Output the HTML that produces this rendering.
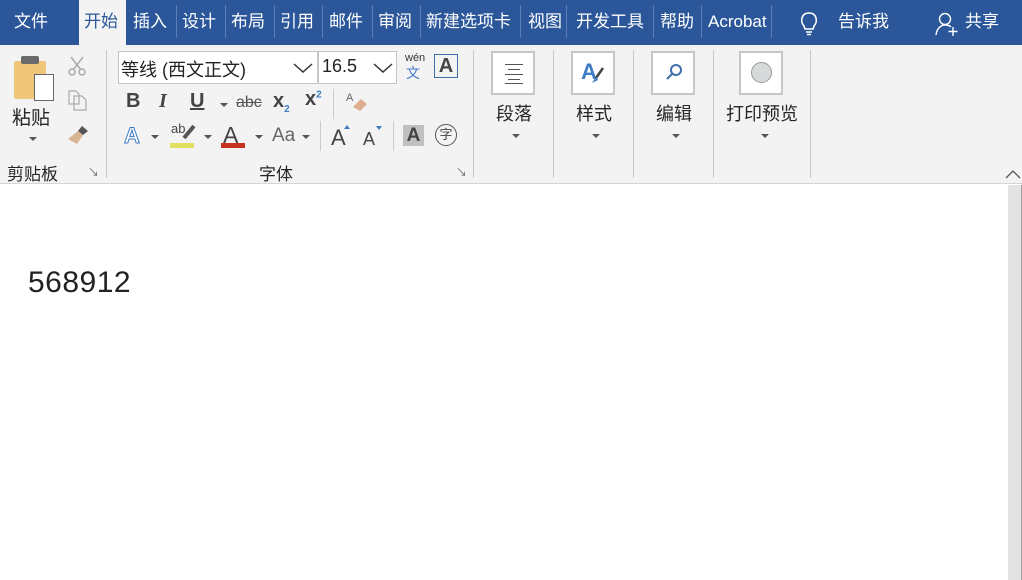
<!DOCTYPE html>
<html><head><meta charset="utf-8"><style>
*{margin:0;padding:0;box-sizing:border-box}
body{width:1022px;height:580px;overflow:hidden;background:#fff;position:relative;font-family:"Liberation Sans","Noto Sans CJK SC",sans-serif;color:#262626}
.a{position:absolute;white-space:nowrap}
#top{position:absolute;left:0;top:0;width:1022px;height:45px;background:#2b579a}
.t{position:absolute;top:11px;font-size:17px;color:#fff;line-height:22px}
.sep{position:absolute;top:5px;width:1px;height:33px;background:#5a7db5}
#rib{position:absolute;left:0;top:45px;width:1022px;height:139px;background:#f3f3f3;border-bottom:1px solid #d5d5d5}
.vs{position:absolute;top:50px;width:1px;height:128px;background:#c8c8c8}
.big{position:absolute;top:51px;width:44px;height:44px;background:#fff;border:2px solid #c6c6c6}
.lbl{position:absolute;top:100px;font-size:18px;color:#262626}
.dd{position:absolute;width:0;height:0;border-left:4px solid transparent;border-right:4px solid transparent;border-top:4px solid #555}
.gl{position:absolute;top:160px;font-size:17px;color:#262626}
.ic{position:absolute;font-size:20px;font-weight:bold;color:#444}
</style></head><body>
<div id="top">
<div class="a" style="left:79px;top:0;width:47px;height:45px;background:#f3f3f3"></div>
<span class="t" style="left:14px">文件</span>
<span class="t" style="left:84px;color:#2b579a">开始</span>
<span class="t" style="left:133px">插入</span>
<span class="t" style="left:182px">设计</span>
<span class="t" style="left:231px">布局</span>
<span class="t" style="left:280px">引用</span>
<span class="t" style="left:329px">邮件</span>
<span class="t" style="left:378px">审阅</span>
<span class="t" style="left:426px">新建选项卡</span>
<span class="t" style="left:528px">视图</span>
<span class="t" style="left:576px">开发工具</span>
<span class="t" style="left:660px">帮助</span>
<span class="t" style="left:708px">Acrobat</span>
<span class="t" style="left:838px">告诉我</span>
<span class="t" style="left:965px">共享</span>
<div class="sep" style="left:176px"></div><div class="sep" style="left:225px"></div><div class="sep" style="left:274px"></div><div class="sep" style="left:322px"></div><div class="sep" style="left:372px"></div><div class="sep" style="left:420px"></div><div class="sep" style="left:520px"></div><div class="sep" style="left:566px"></div><div class="sep" style="left:653px"></div><div class="sep" style="left:701px"></div><div class="sep" style="left:771px"></div>
<svg class="a" style="left:798px;top:10px" width="22" height="26" viewBox="0 0 22 26" fill="none" stroke="#fff" stroke-width="1.6"><path d="M6 16 C2 12 3 3 11 3 C19 3 20 12 16 16 L15 19 H7 Z"/><path d="M8 22H14M9 24.5H13"/></svg>
<svg class="a" style="left:934px;top:11px" width="26" height="26" viewBox="0 0 26 26" fill="none" stroke="#fff" stroke-width="1.4"><circle cx="11" cy="8" r="5.5"/><path d="M2 24 C3 17 7 14 11 14 C14 14 16 15 17 16"/><path d="M19 16V25M14.5 20.5H23.5"/></svg>
</div>
<div id="rib">
</div>
<!-- clipboard -->
<div class="a" style="left:14px;top:61px;width:32px;height:38px;background:#f0c77a;border-radius:2px"></div>
<div class="a" style="left:21px;top:56px;width:18px;height:8px;background:#6b6b6b;border-radius:2px"></div>
<div class="a" style="left:34px;top:74px;width:20px;height:27px;background:#fff;border:1px solid #666"></div>
<span class="a" style="left:12px;top:103px;font-size:19px">粘贴</span>
<div class="dd" style="left:29px;top:137px"></div>
<svg class="a" style="left:66px;top:55px" width="22" height="22" viewBox="0 0 22 22" fill="none" stroke="#aaa" stroke-width="1.5"><path d="M5 2 L15 15M17 2 L7 15"/><circle cx="6" cy="17" r="3"/><circle cx="16" cy="17" r="3"/></svg>
<svg class="a" style="left:67px;top:89px" width="22" height="22" viewBox="0 0 22 22" fill="none" stroke="#aaa" stroke-width="1.2"><path d="M2 2H9L12 5V15H2Z M7 7H15L19 11V21H7Z"/></svg>
<svg class="a" style="left:66px;top:124px" width="24" height="22" viewBox="0 0 24 22"><path d="M16 2 L22 7 L17 11 L12 7Z" fill="#555"/><path d="M12 7 L17 11 L11 20 L2 15 Z" fill="#d8b494"/></svg>
<span class="gl" style="left:7px">剪贴板</span>
<span class="a" style="left:88px;top:164px;font-size:11px;color:#666">↘</span>
<div class="vs" style="left:106px"></div>
<!-- font -->
<div class="a" style="left:118px;top:51px;width:200px;height:33px;background:#fff;border:1px solid #c6c6c6"></div>
<div class="a" style="left:318px;top:51px;width:79px;height:33px;background:#fff;border:1px solid #c6c6c6"></div>
<span class="a" style="left:121px;top:56px;font-size:18px;color:#222">等线 (西文正文)</span>
<span class="a" style="left:322px;top:56px;font-size:18px;color:#222">16.5</span>
<svg class="a" style="left:292px;top:62px" width="22" height="12"><path d="M2 2L11 10L20 2" fill="none" stroke="#333" stroke-width="1.5"/></svg>
<svg class="a" style="left:372px;top:62px" width="22" height="12"><path d="M2 2L11 10L20 2" fill="none" stroke="#333" stroke-width="1.5"/></svg>
<span class="a" style="left:405px;top:52px;font-size:11px;color:#333">wén</span>
<span class="a" style="left:406px;top:63px;font-size:14px;color:#3f7cc4">文</span>
<div class="a" style="left:434px;top:54px;width:24px;height:24px;border:1px solid #3f6fa8;font-size:20px;font-weight:bold;color:#444;text-align:center;line-height:22px">A</div>
<span class="ic" style="left:126px;top:90px">B</span>
<span class="ic" style="left:159px;top:90px;font-style:italic;font-family:'Liberation Serif',serif">I</span>
<span class="ic" style="left:190px;top:90px;text-decoration:underline">U</span>
<div class="dd" style="left:220px;top:103px"></div>
<span class="a" style="left:236px;top:94px;font-size:16px;color:#555;text-decoration:line-through">abc</span>
<span class="ic" style="left:273px;top:90px">x<sub style="font-size:10px;color:#3f7cc4">2</sub></span>
<span class="ic" style="left:305px;top:88px">x<sup style="font-size:10px;color:#3f7cc4">2</sup></span>
<div class="a" style="left:333px;top:89px;width:1px;height:30px;background:#ccc"></div>
<svg class="a" style="left:345px;top:89px" width="24" height="26"><text x="1" y="12" font-size="11" fill="#666" font-family="Liberation Sans">A</text><path d="M8 18 L16 10 L22 15 L15 22Z" fill="#dfae90"/></svg>
<span class="a" style="left:124px;top:123px;font-size:22px;color:#fff;-webkit-text-stroke:1px #3f7cc4;font-weight:bold">A</span>
<div class="dd" style="left:151px;top:135px"></div>
<span class="a" style="left:171px;top:121px;font-size:13px;color:#444">ab</span>
<div class="a" style="left:170px;top:143px;width:24px;height:5px;background:#e0e060"></div>
<svg class="a" style="left:180px;top:124px" width="16" height="18"><path d="M14 2 L4 14" stroke="#555" stroke-width="4"/></svg>
<div class="dd" style="left:204px;top:135px"></div>
<span class="a" style="left:223px;top:122px;font-size:23px;color:#444">A</span>
<div class="a" style="left:221px;top:143px;width:24px;height:5px;background:#c8321e"></div>
<div class="dd" style="left:255px;top:135px"></div>
<span class="a" style="left:272px;top:125px;font-size:19px;color:#666">Aa</span>
<div class="dd" style="left:302px;top:135px"></div>
<div class="a" style="left:320px;top:121px;width:1px;height:30px;background:#ccc"></div>
<span class="a" style="left:331px;top:125px;font-size:22px;color:#444">A</span>
<div class="a" style="left:344px;top:125px;width:0;height:0;border-left:3px solid transparent;border-right:3px solid transparent;border-bottom:4px solid #3f7cc4"></div>
<span class="a" style="left:363px;top:129px;font-size:18px;color:#444">A</span>
<div class="a" style="left:376px;top:126px;width:0;height:0;border-left:3px solid transparent;border-right:3px solid transparent;border-top:4px solid #3f7cc4"></div>
<div class="a" style="left:393px;top:121px;width:1px;height:30px;background:#ccc"></div>
<div class="a" style="left:403px;top:125px;width:21px;height:21px;background:#c0c0c0;font-size:19px;font-weight:bold;color:#444;text-align:center;line-height:22px">A</div>
<div class="a" style="left:435px;top:124px;width:22px;height:22px;border:1.5px solid #555;border-radius:50%;font-size:13px;color:#444;text-align:center;line-height:19px">字</div>
<span class="gl" style="left:259px">字体</span>
<span class="a" style="left:456px;top:164px;font-size:11px;color:#666">↘</span>
<div class="vs" style="left:473px"></div>
<!-- big groups -->
<div class="big" style="left:491px"></div>
<svg class="a" style="left:502px;top:61px" width="24" height="24" stroke="#555" stroke-width="1"><path d="M3 3.5H21M6 8.5H18M3 13.5H21M6 18.5H18M3 22.5H21"/></svg>
<span class="lbl" style="left:496px">段落</span><div class="dd" style="left:512px;top:134px"></div>
<div class="vs" style="left:553px"></div>
<div class="big" style="left:571px"></div>
<span class="a" style="left:581px;top:59px;font-size:22px;font-weight:bold;color:#3f7cc4">A</span>
<svg class="a" style="left:590px;top:66px" width="16" height="20"><path d="M13 2L6 12" stroke="#444" stroke-width="2.5"/><path d="M6 11 L2 17 L8 14Z" fill="#3f7cc4"/></svg>
<span class="lbl" style="left:576px">样式</span><div class="dd" style="left:592px;top:134px"></div>
<div class="vs" style="left:633px"></div>
<div class="big" style="left:651px"></div>
<svg class="a" style="left:664px;top:62px" width="20" height="20" fill="none" stroke="#3f6fa8" stroke-width="2"><circle cx="12" cy="8" r="5"/><path d="M8.5 11.5L3 17"/></svg>
<span class="lbl" style="left:656px">编辑</span><div class="dd" style="left:672px;top:134px"></div>
<div class="vs" style="left:713px"></div>
<div class="big" style="left:739px"></div>
<div class="a" style="left:751px;top:62px;width:21px;height:21px;border-radius:50%;background:#d7dada;border:1px solid #999"></div>
<span class="lbl" style="left:726px">打印预览</span><div class="dd" style="left:761px;top:134px"></div>
<div class="vs" style="left:810px"></div>
<svg class="a" style="left:1005px;top:168px" width="17" height="12"><path d="M1 10L8 3L15 10" fill="none" stroke="#555" stroke-width="1.3"/></svg>
<!-- doc -->
<div class="a" style="left:1008px;top:185px;width:14px;height:395px;background:#e3e3e3;border-right:1px solid #a0a0a0"></div>
<span class="a" style="left:28px;top:266px;font-size:30px;color:#222;letter-spacing:0.5px">568912</span>
</body></html>
